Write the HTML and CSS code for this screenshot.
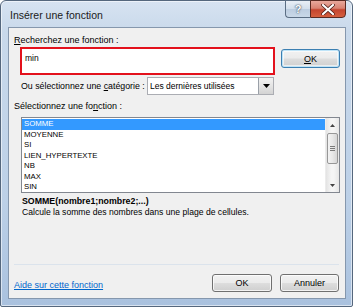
FILE: index.html
```html
<!DOCTYPE html>
<html lang="fr">
<head>
<meta charset="utf-8">
<title>Insérer une fonction</title>
<link rel="stylesheet" href="styles.css">
</head>
<body>
<div class="window">
  <div class="titlebar">
    <span class="title">Insérer une fonction</span>
    <div class="caption-btns">
      <div class="cap help">?</div>
      <div class="cap close">
        <svg width="14" height="11" viewBox="0 0 14 11"><path d="M2 1 L12 10 M12 1 L2 10" stroke="#4a1a14" stroke-width="3.6" stroke-linecap="round"/><path d="M2 1 L12 10 M12 1 L2 10" stroke="#fff" stroke-width="2.2" stroke-linecap="round"/></svg>
      </div>
    </div>
  </div>
  <div class="client">
    <div class="label"><u>R</u>echerchez une fonction :</div>
    <div class="search-row">
      <div class="search-box"><span class="search-text">min</span></div>
      <button class="btn default"><u>O</u>K</button>
    </div>
    <div class="cat-row">
      <span class="cat-label">Ou sélectionnez une <u>c</u>atégorie :</span>
      <div class="select">
        <span class="select-text">Les dernières utilisées</span>
        <div class="drop"><svg width="7" height="4" viewBox="0 0 7 4"><path d="M0 0 H7 L3.5 4 Z" fill="#000"/></svg></div>
      </div>
    </div>
    <div class="label label-fn">Sélectionnez une fo<u>n</u>ction :</div>
    <div class="listbox">
      <ul class="items">
        <li class="sel">SOMME</li>
        <li>MOYENNE</li>
        <li>SI</li>
        <li>LIEN_HYPERTEXTE</li>
        <li>NB</li>
        <li>MAX</li>
        <li>SIN</li>
      </ul>
      <div class="scrollbar">
        <div class="arrow"><svg width="5" height="3" viewBox="0 0 5 3"><path d="M0 3 H5 L2.5 0 Z" fill="#444"/></svg></div>
        <div class="track">
          <div class="thumb"><span class="grip"></span><span class="grip"></span><span class="grip"></span></div>
        </div>
        <div class="arrow"><svg width="5" height="3" viewBox="0 0 5 3"><path d="M0 0 H5 L2.5 3 Z" fill="#444"/></svg></div>
      </div>
    </div>
    <div class="syntax">SOMME(nombre1;nombre2;...)</div>
    <div class="desc">Calcule la somme des nombres dans une plage de cellules.</div>
    <div class="spacer"></div>
    <div class="sep"></div>
    <div class="bottom-row">
      <a class="help-link" href="#">Aide sur cette fonction</a>
      <div class="bottom-btns">
        <button class="btn btn-ok">OK</button>
        <button class="btn btn-cancel">Annuler</button>
      </div>
    </div>
  </div>
</div>
</body>
</html>
```
FILE: styles.css
```css
html, body {
  margin: 0;
  padding: 0;
  width: 354px;
  height: 308px;
  overflow: hidden;
  background: #ffffff;
}

.window {
  box-sizing: border-box;
  width: 353px;
  height: 307px;
  border: 1px solid #55677d;
  border-radius: 6px 6px 2px 2px;
  background: linear-gradient(180deg, #d7e3f1 0px, #c9d9eb 30px, #bcd0e7 200px, #a9c1de 307px);
  box-shadow: inset 0 0 0 1px rgba(255,255,255,0.55);
  padding: 0 6px 7px 7px;
  display: flex;
  flex-direction: column;
  font-family: "Liberation Sans", Arial, sans-serif;
  color: #000;
}

.titlebar {
  height: 26px;
  display: flex;
  align-items: flex-start;
}

.title {
  font-size: 10.5px;
  line-height: 12px;
  margin-top: 8px;
  margin-left: 2px;
  color: #1a1a1a;
}

.caption-btns {
  margin-left: auto;
  margin-top: -1px;
  margin-right: 0;
  display: flex;
}

.cap {
  height: 18px;
  box-sizing: border-box;
  border: 1px solid #5b6e84;
  display: flex;
  align-items: center;
  justify-content: center;
}

.help {
  width: 25px;
  border-right: none;
  border-radius: 0 0 0 4px;
  background: linear-gradient(180deg, #e9eff6 0%, #d3dfec 48%, #bccde0 52%, #c9d8e8 100%);
  color: #ffffff;
  font-weight: bold;
  font-size: 11px;
  text-shadow: 0 0 2px #3c4d62, 0 0 1px #3c4d62;
}

.close {
  width: 36px;
  border-radius: 0 0 4px 0;
  border-color: #5a2a22;
  background: linear-gradient(180deg, #e8a89c 0%, #d98373 45%, #c4452f 55%, #d5603f 100%);
}

.client {
  flex: 1;
  background: #f0f0f0;
  border: 1px solid #8597ad;
  display: flex;
  flex-direction: column;
  padding: 6px 5px 6px 5px;
  font-size: 9px;
  line-height: 12px;
}

.label u, .cat-label u, .btn u {
  text-decoration: underline;
  text-underline-offset: 1px;
}

.search-row {
  display: flex;
  align-items: flex-start;
  margin-top: 1px;
  padding-left: 6px;
}

.search-box {
  box-sizing: border-box;
  width: 255px;
  height: 28px;
  border: 2px solid #e3111c;
  background: #fff;
  padding: 4px 0 0 3px;
  font-size: 8.5px;
  line-height: 11px;
}

.btn {
  box-sizing: border-box;
  height: 18px;
  border: 1px solid #707070;
  border-radius: 3px;
  background: linear-gradient(180deg, #f2f2f2 0%, #ebebeb 48%, #dddddd 52%, #cfcfcf 100%);
  box-shadow: inset 0 0 0 1px rgba(255,255,255,0.75);
  font-family: "Liberation Sans", Arial, sans-serif;
  font-size: 9px;
  line-height: 14px;
  color: #000;
  padding: 0;
  text-align: center;
}

.default {
  width: 59px;
  height: 19px;
  margin-left: 6px;
  margin-top: 2px;
  border-color: #3c7fb1;
  box-shadow: inset 0 0 0 1px #bfe4f8, inset 0 0 0 2px rgba(255,255,255,0.6);
}

.cat-row {
  display: flex;
  align-items: center;
  margin-top: 2px;
  padding-left: 7px;
  height: 17px;
}

.cat-label {
  flex: none;
  width: 126px;
  white-space: nowrap;
  font-size: 8.8px;
}

.select {
  box-sizing: border-box;
  width: 127px;
  height: 18px;
  border: 1px solid #abadb3;
  background: #fff;
  display: flex;
  align-items: center;
  padding-left: 2px;
}

.select-text {
  flex: 1;
  font-size: 8.5px;
  white-space: nowrap;
}

.drop {
  box-sizing: border-box;
  width: 15px;
  height: 16px;
  border-left: 1px solid #9aa0a8;
  background: linear-gradient(180deg, #f2f2f2 0%, #e4e4e4 50%, #d3d3d3 100%);
  display: flex;
  align-items: center;
  justify-content: center;
}

.label-fn {
  margin-top: 6px;
}

.listbox {
  box-sizing: border-box;
  margin-top: 5px;
  margin-left: 7px;
  height: 76px;
  border: 1px solid #828790;
  background: #fff;
  display: flex;
}

.items {
  list-style: none;
  margin: 0;
  padding: 1px 0 0 0;
  flex: 1;
  font-size: 7.8px;
  line-height: 10.5px;
  color: #000;
}

.items li {
  padding-left: 2px;
  height: 10.5px;
}

.items li.sel {
  background: #3399ff;
  color: #fff;
}

.scrollbar {
  width: 13px;
  display: flex;
  flex-direction: column;
  background: linear-gradient(90deg, #e3e3e3, #f5f5f5 40%, #f5f5f5 60%, #e6e6e6);
  border-left: 1px solid #ececec;
}

.arrow {
  height: 14px;
  display: flex;
  align-items: center;
  justify-content: center;
}

.track {
  flex: 1;
  padding-top: 1px;
}

.thumb {
  box-sizing: border-box;
  height: 31px;
  margin: 0 1px;
  border: 1px solid #979797;
  border-radius: 2px;
  background: linear-gradient(90deg, #f3f3f3 0%, #e8e8e8 50%, #d6d6d6 100%);
  display: flex;
  flex-direction: column;
  align-items: center;
  justify-content: center;
  gap: 1px;
}

.grip {
  width: 5px;
  height: 1px;
  background: #7a7a7a;
}

.syntax {
  margin-top: 3px;
  padding-left: 8px;
  font-weight: bold;
  font-size: 8.8px;
  line-height: 11px;
}

.desc {
  padding-left: 8px;
  font-size: 8.6px;
  line-height: 11px;
}

.spacer {
  flex: 1;
}

.sep {
  height: 1px;
  background: #dbe3ec;
  margin-right: 1px;
}

.bottom-row {
  display: flex;
  align-items: center;
  margin-top: 9px;
}

.help-link {
  color: #0066cc;
  text-decoration: underline;
  font-size: 9px;
  margin-top: 3px;
}

.bottom-btns {
  margin-left: auto;
  display: flex;
  gap: 8px;
  margin-right: 1px;
}

.btn-ok {
  width: 60px;
}

.btn-cancel {
  width: 59px;
}
```
